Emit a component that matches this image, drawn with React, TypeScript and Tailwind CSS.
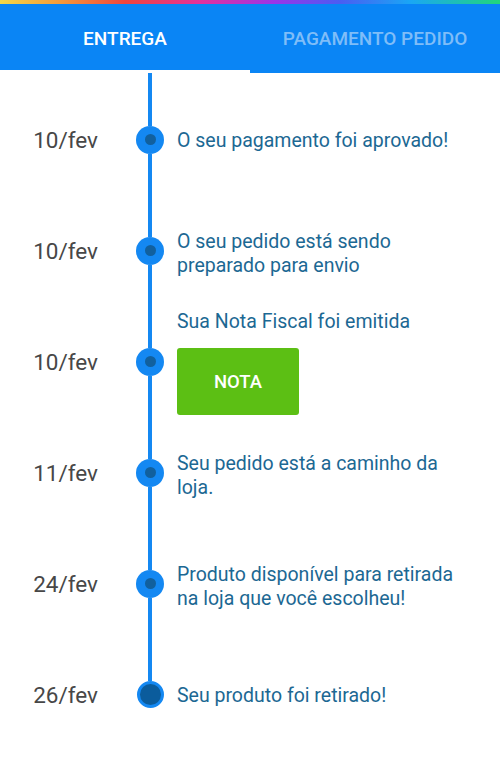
import React from "react";

type Step = {
	date: string;
	text: string[];
	nota?: boolean;
	last?: boolean;
};

const STEPS: Step[] = [
	{ date: "10/fev", text: ["O seu pagamento foi aprovado!"] },
	{ date: "10/fev", text: ["O seu pedido está sendo", "preparado para envio"] },
	{ date: "10/fev", text: ["Sua Nota Fiscal foi emitida"], nota: true },
	{ date: "11/fev", text: ["Seu pedido está a caminho da", "loja."] },
	{ date: "24/fev", text: ["Produto disponível para retirada", "na loja que você escolheu!"] },
	{ date: "26/fev", text: ["Seu produto foi retirado!"], last: true },
];

function Dot({ last }: { last?: boolean }) {
	if (last) {
		return (
			<div className="w-[27px] h-[27px] rounded-full bg-[#0b5c9c] border-[3px] border-[#1488f2] shrink-0" />
		);
	}
	return (
		<div className="w-[28px] h-[28px] rounded-full bg-[#1488f2] flex items-center justify-center shrink-0">
			<div className="w-[11px] h-[11px] rounded-full bg-[#11609e]" />
		</div>
	);
}

function Row({ step }: { step: Step }) {
	return (
		<div className="flex h-[111px]">
			<div className="w-[136px] shrink-0 flex items-center justify-end pr-[38px] pt-[2px] text-[22.5px] text-[#474747]">
				{step.date}
			</div>
			<div className="w-[28px] shrink-0 flex flex-col items-center">
				<div className="w-[4px] flex-1 bg-[#1488f2]" />
				<Dot last={step.last} />
				<div className={`w-[4px] flex-1 ${step.last ? "bg-transparent" : "bg-[#1488f2]"}`} />
			</div>
			{step.nota ? (
				<div className="pl-[13px] pt-[4px] flex flex-col">
					<div className="text-[19.5px] leading-[24px] text-[#1c6893]">{step.text[0]}</div>
					<button className="mt-[14px] w-[122px] h-[67px] pt-[3px] rounded-[3px] bg-[#5cbf14] text-white text-[18.5px] font-medium">
						NOTA
					</button>
				</div>
			) : (
				<div
					className={`pl-[13px] flex flex-col justify-center text-[19.5px] leading-[24px] text-[#1c6893] ${
						step.text.length > 1 ? "pt-[6px]" : "pt-[3px]"
					}`}>
					{step.text.map((t, i) => (
						<div key={i}>{t}</div>
					))}
				</div>
			)}
		</div>
	);
}

export default function App() {
	return (
		<div className="w-[500px] h-[761px] bg-white overflow-hidden font-['Roboto',sans-serif]">
			<div className="h-[4px] bg-[linear-gradient(90deg,#f2d84a_0%,#f59a3a_12%,#f0453c_25%,#e4309c_40%,#9a34e8_55%,#4a5df2_68%,#1aa6f5_82%,#22d67a_100%)]" />
			<div className="h-[69px] bg-[#0a85f5] flex">
				<div className="flex-1 flex flex-col">
					<div className="flex-1 flex items-center justify-center text-[19px] font-medium text-white pt-[5px]">
						ENTREGA
					</div>
					<div className="h-[3px] bg-white" />
				</div>
				<div className="flex-1 flex items-center justify-center text-[19px] font-medium text-[#7fbdf8] pt-[2px]">
					PAGAMENTO PEDIDO
				</div>
			</div>
			<div className="flex">
				<div className="w-[136px] shrink-0" />
				<div className="w-[28px] flex justify-center">
					<div className="w-[4px] h-[11px] bg-[#1488f2]" />
				</div>
			</div>
			{STEPS.map((s, i) => (
				<Row key={i} step={s} />
			))}
		</div>
	);
}
